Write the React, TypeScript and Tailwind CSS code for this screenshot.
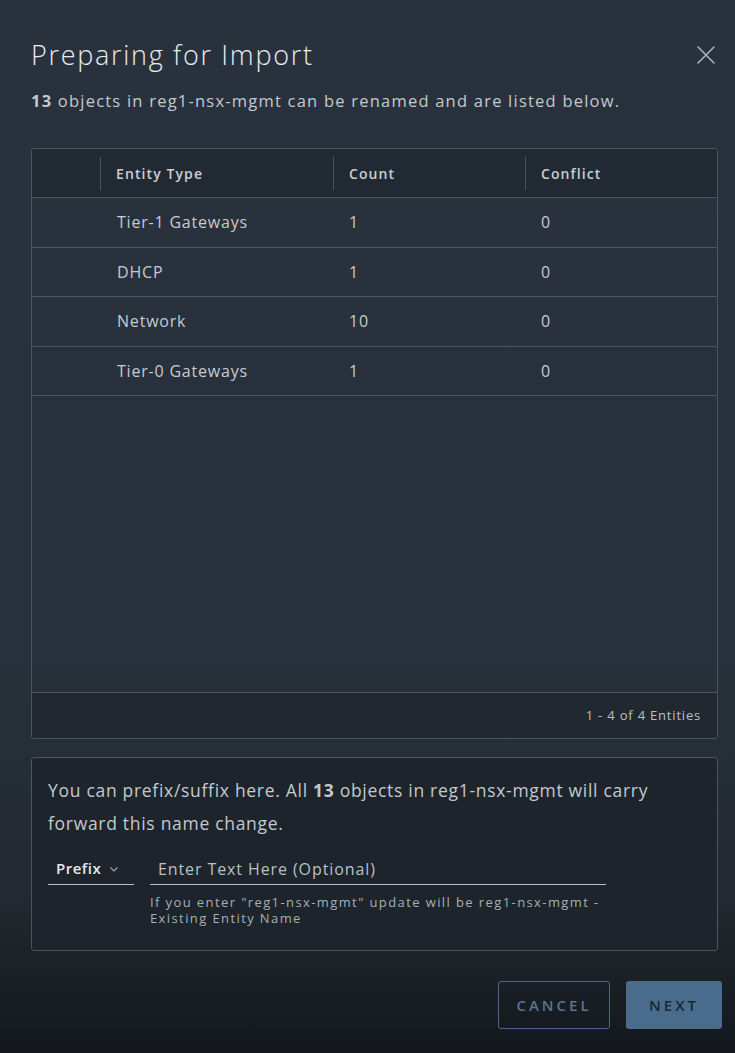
import React from "react";

const rows = [
  { type: "Tier-1 Gateways", count: "1", conflict: "0" },
  { type: "DHCP", count: "1", conflict: "0" },
  { type: "Network", count: "10", conflict: "0" },
  { type: "Tier-0 Gateways", count: "1", conflict: "0" },
];

export default function App() {
  return (
    <div
      className="w-[735px] h-[1053px] overflow-hidden bg-[linear-gradient(to_bottom,#29323c_0%,#28313b_62%,#222930_85%,#14181d_100%)] text-[#c5cbd2] relative"
      style={{ fontFamily: '"Open Sans", "Liberation Sans", sans-serif' }}
    >
      <div className="px-[31px] pt-[35px]">
        <div className="flex items-start justify-between">
          <h1 className="text-[27px] leading-[40px] font-light text-[#e8ecef] tracking-[1.7px]">Preparing for Import</h1>
          <button className="mt-[9px] mr-[-13px] text-[#aab3bb]">
            <svg width="22" height="22" viewBox="0 0 22 22" fill="none" stroke="currentColor" strokeWidth="1.6" strokeLinecap="round">
              <path d="M3 3 L19 19 M19 3 L3 19" />
            </svg>
          </button>
        </div>
        <p className="mt-[15px] text-[16.5px] leading-[22px] text-[#c3c9cf] tracking-[1.22px]">
          <span className="font-bold">13</span> objects in reg1-nsx-mgmt can be renamed and are listed below.
        </p>

        <div className="mt-[36px] w-[687px] h-[591px] border border-[#4a5560] rounded-[3px] flex flex-col overflow-hidden">
          <div className="h-[49px] shrink-0 bg-[#212a33] border-b border-[#4a5560] flex items-center text-[14px] font-semibold text-[#c9ced3] tracking-[1.1px]">
            <div className="w-[69px] h-[33px] border-r border-[#4a5560]" />
            <div className="w-[233px] h-[33px] border-r border-[#4a5560] flex items-center pl-[15px]">Entity Type</div>
            <div className="w-[192px] h-[33px] border-r border-[#4a5560] flex items-center pl-[15px]">Count</div>
            <div className="flex-1 h-[33px] flex items-center pl-[15px]">Conflict</div>
          </div>
          {rows.map((r) => (
            <div key={r.type} className="h-[49.5px] shrink-0 border-b border-[#4a5560] flex items-center text-[16px] text-[#c5cbd2] tracking-[0.8px]">
              <div className="w-[69px]" />
              <div className="w-[233px] pl-[16px]">{r.type}</div>
              <div className="w-[192px] pl-[15px]">{r.count}</div>
              <div className="flex-1 pl-[15px]">{r.conflict}</div>
            </div>
          ))}
          <div className="flex-1" />
          <div className="h-[46px] shrink-0 bg-[#212830] border-t border-[#4a5560] flex items-center justify-end pr-[16px] text-[13px] text-[#b9c0c7] tracking-[0.8px]">
            1 - 4 of 4 Entities
          </div>
        </div>

        <div className="mt-[18px] w-[687px] h-[194px] border border-[#4a5560] rounded-[3px] bg-[#1d242b] px-[16px] pt-[16px]">
          <p className="text-[17.5px] leading-[33px] text-[#c3c9cf] tracking-[0.7px]">
            You can prefix/suffix here. All <span className="font-bold">13</span> objects in reg1-nsx-mgmt will carry forward this name change.
          </p>
          <div className="mt-[15px] flex items-start">
            <div className="w-[86px] h-[30px] border-b border-[#b7bec5] flex items-center gap-[8px] pl-[8px] pb-[2px]">
              <span className="text-[15px] font-semibold text-[#e6e9ec] tracking-[0.5px]">Prefix</span>
              <svg width="10" height="10" viewBox="0 0 10 10" fill="none" stroke="#9ba4ad" strokeWidth="1.2">
                <path d="M1.5 3.5 L5 7 L8.5 3.5" />
              </svg>
            </div>
            <div className="ml-[16px]">
              <div className="w-[456px] h-[30px] border-b border-[#b7bec5] flex items-center pl-[8px] pb-[2px] text-[16px] text-[#b9c0c7] tracking-[0.9px]">
                Enter Text Here (Optional)
              </div>
              <p className="mt-[9px] text-[13px] leading-[16px] text-[#a8afb6] w-[458px] tracking-[1.4px]">
                If you enter "reg1-nsx-mgmt" update will be reg1-nsx-mgmt - Existing Entity Name
              </p>
            </div>
          </div>
        </div>

        <div className="mt-[30px] flex justify-end gap-[16px] mr-[-18px]">
          <button className="w-[112px] h-[48px] rounded-[3px] border border-[#4b6784] text-[#587592] text-[15px] font-semibold tracking-[3px]">
            CANCEL
          </button>
          <button className="w-[96px] h-[48px] rounded-[3px] bg-[#4a6c8c] text-[#17283a] text-[15px] font-semibold tracking-[3px]">
            NEXT
          </button>
        </div>
      </div>
    </div>
  );
}
